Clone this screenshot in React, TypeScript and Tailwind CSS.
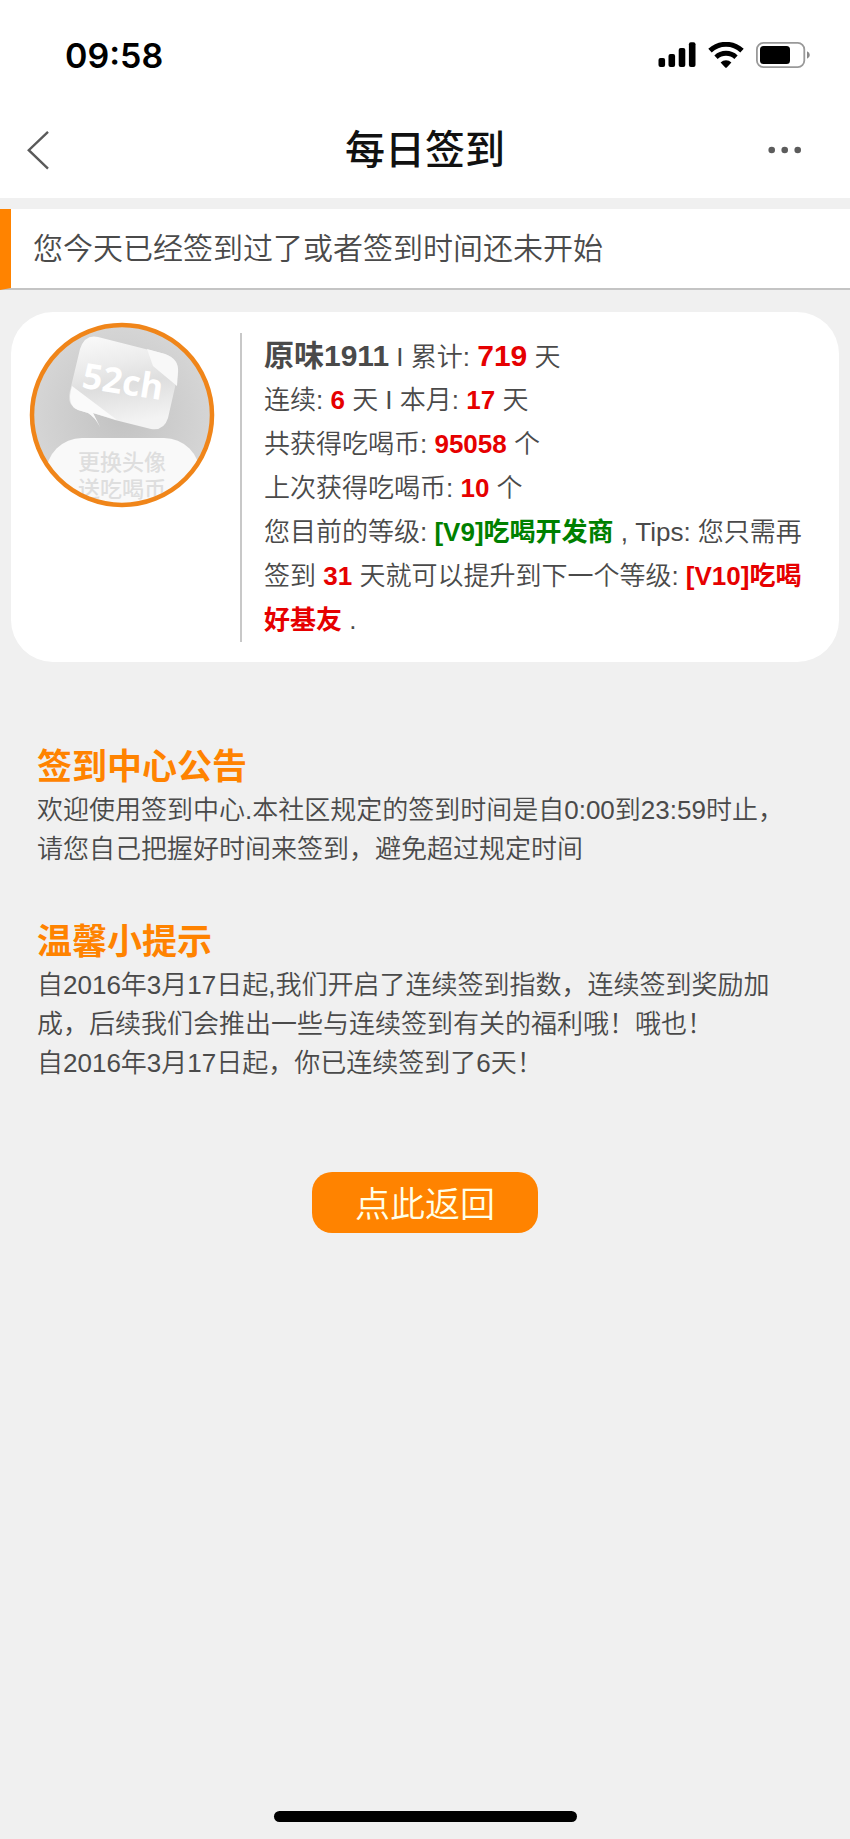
import type { ReactNode } from "react";

// ============================================================
// Status bar
// ============================================================

function SignalIcon() {
  return (
    <svg width="38" height="26" viewBox="0 0 38 26" fill="#000" aria-hidden="true">
      <rect x="0.5" y="16" width="6.6" height="9" rx="2" />
      <rect x="10.5" y="12" width="6.6" height="13" rx="2" />
      <rect x="20.7" y="6" width="6.6" height="19" rx="2" />
      <rect x="30.9" y="0.3" width="6.6" height="24.7" rx="2" />
    </svg>
  );
}

function WifiIcon() {
  return (
    <svg width="36" height="26" viewBox="0 0 36 26" aria-hidden="true">
      <path d="M2 8.6A23.5 23.5 0 0 1 34 8.6" fill="none" stroke="#000" strokeWidth="5" />
      <path d="M8 15.2A14.6 14.6 0 0 1 28 15.2" fill="none" stroke="#000" strokeWidth="4.8" />
      <path d="M12.6 20.4A8 8 0 0 1 23.4 20.4L18.8 25.4Q18 26.2 17.2 25.4Z" fill="#000" />
    </svg>
  );
}

function BatteryIcon() {
  return (
    <svg width="54" height="26" viewBox="0 0 54 26" aria-hidden="true">
      <rect x="0.9" y="0.9" width="47.4" height="24.2" rx="6.5" fill="none" stroke="#999" strokeWidth="1.8" />
      <rect x="4" y="4" width="30" height="18" rx="3.5" fill="#000" />
      <path d="M51 9.2Q53.8 10.4 53.8 13T51 16.8Z" fill="#888" />
    </svg>
  );
}

function StatusBar() {
  return (
    <div className="flex h-[102px] items-center justify-between pt-2 pr-10 pl-[65px]">
      <span className="font-['Inter',sans-serif] text-[34px] font-semibold text-black">09:58</span>
      <div className="flex items-center gap-3">
        <SignalIcon />
        <WifiIcon />
        <BatteryIcon />
      </div>
    </div>
  );
}

// ============================================================
// Nav bar
// ============================================================

function NavBar() {
  return (
    <div className="grid h-24 grid-cols-[1fr_auto_1fr] items-center px-6">
      <button type="button" aria-label="返回" className="cursor-pointer justify-self-start">
        <svg width="28" height="40" viewBox="0 0 28 40" fill="none" stroke="#5a5a5a" strokeWidth="2.4">
          <path d="M24 1.8L4.8 20.2L24 38.6" />
        </svg>
      </button>
      <h1 className="text-[40px] leading-none font-medium text-[#111]">每日签到</h1>
      <button type="button" aria-label="更多" className="cursor-pointer justify-self-end pr-6">
        <svg width="34" height="8" viewBox="0 0 34 8" fill="#5c5c5c">
          <circle cx="3.7" cy="4" r="3.3" />
          <circle cx="16.7" cy="4" r="3.3" />
          <circle cx="29.7" cy="4" r="3.3" />
        </svg>
      </button>
    </div>
  );
}

// ============================================================
// Profile card
// ============================================================

function Avatar() {
  return (
    <svg
      viewBox="0 0 186 186"
      role="img"
      aria-label="头像"
      className="h-[186px] w-[186px] shrink-0"
    >
      <defs>
        <radialGradient id="avatar-bg" cx="0.5" cy="0.5" r="0.5">
          <stop offset="0" stopColor="#c2c2c2" />
          <stop offset="1" stopColor="#d6d6d6" />
        </radialGradient>
        <linearGradient id="bubble" x1="0" y1="0" x2="0.2" y2="1">
          <stop offset="0" stopColor="#fbfbfb" />
          <stop offset="0.35" stopColor="#ececec" />
          <stop offset="0.6" stopColor="#dedede" />
          <stop offset="1" stopColor="#f3f3f3" />
        </linearGradient>
        <clipPath id="avatar-clip">
          <circle cx="93" cy="93" r="90" />
        </clipPath>
      </defs>
      <g clipPath="url(#avatar-clip)">
        <rect width="186" height="186" fill="url(#avatar-bg)" />
        <path
          d="M69 15L136 32Q151 37 149 52L139 96Q135 109 122 107L86 98L64 91L71 105Q66 95 59 91L49 88Q39 84 40 73L51 27Q56 12 69 15Z"
          fill="url(#bubble)"
        />
        <path d="M43 64L88 98L64 91L71 105Q66 95 59 91L49 88Q37 83 43 64Z" fill="#fafafa" />
        <path d="M124 44L148 64L149 50Q150 37 136 32L118 27Z" fill="#f8f8f8" />
        <text
          x="94"
          y="72"
          textAnchor="middle"
          transform="rotate(9 94 60)"
          fill="#fff"
          className="font-['Open_Sans',sans-serif] text-[35px] font-bold"
        >
          52ch
        </text>
        <rect x="17" y="116" width="154" height="90" rx="36" fill="#f9f9f9" />
        <text x="93" y="148" textAnchor="middle" fill="#dedede" className="text-[22px] font-medium">
          更换头像
        </text>
        <text x="93" y="175" textAnchor="middle" fill="#dedede" className="text-[22px] font-medium">
          送吃喝币
        </text>
      </g>
      <circle cx="93" cy="93" r="90" fill="none" stroke="#f08519" strokeWidth="4.5" />
    </svg>
  );
}

function Num({ children }: { children: ReactNode }) {
  return <strong className="font-semibold text-[#e60000]">{children}</strong>;
}

function ProfileCard() {
  return (
    <section className="mx-[11px] mt-[22px] flex rounded-[42px] bg-white py-[10px] pr-[22px] pl-[18px]">
      <Avatar />
      <div className="mt-[11px] mb-[10px] ml-[25px] flex-1 border-l-2 border-[#c8c8c8] pt-px pl-[22px] text-[26px] leading-[44px]">
        <p className="h-11">
          <strong className="text-[30px] font-semibold">原味1911</strong> I 累计:{" "}
          <strong className="text-[30px] font-semibold text-[#e60000]">719</strong> 天
        </p>
        <p>
          连续: <Num>6</Num> 天 I 本月: <Num>17</Num> 天
        </p>
        <p>
          共获得吃喝币: <Num>95058</Num> 个
        </p>
        <p>
          上次获得吃喝币: <Num>10</Num> 个
        </p>
        <p>
          您目前的等级: <strong className="font-semibold text-[#008000]">[V9]吃喝开发商</strong> , Tips:
          您只需再签到 <Num>31</Num> 天就可以提升到下一个等级: <Num>[V10]吃喝好基友</Num> .
        </p>
      </div>
    </section>
  );
}

// ============================================================
// Notices
// ============================================================

function Notice({ title, children }: { title: string; children: ReactNode }) {
  return (
    <section className="text-[26px] leading-[39px]">
      <h2 className="text-[35px] leading-[48px] font-semibold text-[#ff8300]">{title}</h2>
      {children}
    </section>
  );
}

export default function App() {
  return (
    <div className="flex min-h-screen flex-col bg-[#f0f0f0] font-['Liberation_Sans','Noto_Sans_CJK_SC',sans-serif] font-[350] text-[#4a4a4a]">
      <header className="bg-white">
        <StatusBar />
        <NavBar />
      </header>

      <main>
        <p className="mt-[11px] border-b-2 border-l-[11px] border-b-[#c4c4c4] border-l-[#ff8300] bg-white py-4 pl-[22px] text-[30px] leading-[47px]">
          您今天已经签到过了或者签到时间还未开始
        </p>

        <ProfileCard />

        <div className="mt-[81px] flex flex-col gap-[49px] pr-[57px] pl-[37px]">
          <Notice title="签到中心公告">
            <p>
              欢迎使用签到中心.本社区规定的签到时间是自0:00到23:59时止，请您自己把握好时间来签到，避免超过规定时间
            </p>
          </Notice>
          <Notice title="温馨小提示">
            <p>
              自2016年3月17日起,我们开启了连续签到指数，连续签到奖励加成，后续我们会推出一些与连续签到有关的福利哦！哦也！
            </p>
            <p>自2016年3月17日起，你已连续签到了6天！</p>
          </Notice>
        </div>

        <div className="mt-[89px] flex justify-center">
          <button
            type="button"
            className="h-[61px] w-[226px] cursor-pointer rounded-[20px] bg-[#ff8300] pt-1 text-[35px] leading-none text-[#ffffe8]"
          >
            点此返回
          </button>
        </div>
      </main>

      {/* home indicator */}
      <div className="mx-auto mt-auto mb-[17px] h-[11px] w-[303px] rounded-full bg-black" />
    </div>
  );
}
